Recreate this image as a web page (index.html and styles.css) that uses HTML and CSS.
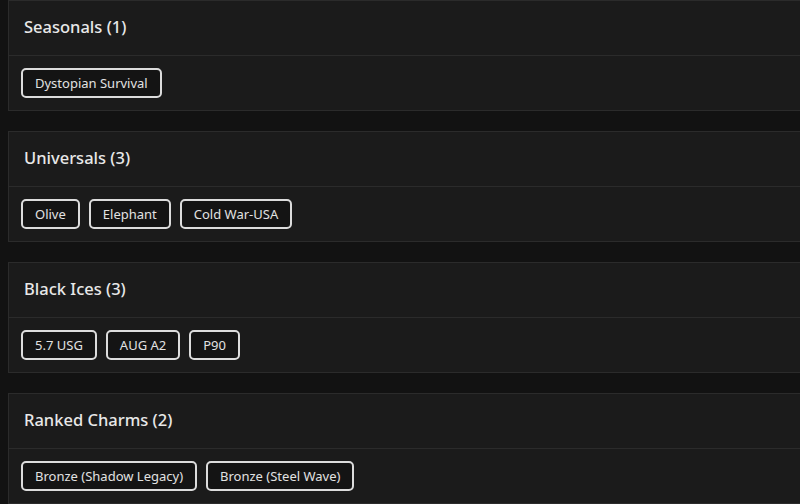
FILE: index.html
```html
<!DOCTYPE html>
<html lang="en">
<head>
<meta charset="utf-8">
<title>Collection</title>
<link rel="stylesheet" href="styles.css">
</head>
<body>
<div class="list">
  <section class="card">
    <header class="card-head"><h2>Seasonals (1)</h2></header>
    <div class="card-body">
      <span class="chip">Dystopian Survival</span>
    </div>
  </section>
  <section class="card">
    <header class="card-head"><h2>Universals (3)</h2></header>
    <div class="card-body">
      <span class="chip">Olive</span>
      <span class="chip">Elephant</span>
      <span class="chip">Cold War-USA</span>
    </div>
  </section>
  <section class="card">
    <header class="card-head"><h2>Black Ices (3)</h2></header>
    <div class="card-body">
      <span class="chip">5.7 USG</span>
      <span class="chip">AUG A2</span>
      <span class="chip">P90</span>
    </div>
  </section>
  <section class="card">
    <header class="card-head"><h2>Ranked Charms (2)</h2></header>
    <div class="card-body">
      <span class="chip">Bronze (Shadow Legacy)</span>
      <span class="chip">Bronze (Steel Wave)</span>
    </div>
  </section>
</div>
</body>
</html>
```

FILE: styles.css
```css
html, body {
  margin: 0;
  padding: 0;
  background: #121212;
  overflow: hidden;
}
body {
  font-family: "Noto Sans", "Open Sans", sans-serif;
  color: #e4e4e4;
}
.list {
  display: flex;
  flex-direction: column;
  gap: 20px;
  padding-left: 8px;
  width: 820px;
}
.card {
  background: #1b1b1b;
  border: 1px solid #2b2b2b;
}
.card-head {
  height: 54px;
  box-sizing: border-box;
  display: flex;
  align-items: center;
  padding: 0 15px 3px;
  border-bottom: 1px solid #2b2b2b;
  height: 55px;
}
.card-head h2 {
  margin: 0;
  font-size: 16.5px;
  font-weight: 500;
  color: #e8e8e8;
}
.card-body {
  display: flex;
  gap: 9px;
  padding: 12px 12px;
}
.chip {
  height: 30px;
  box-sizing: border-box;
  display: inline-flex;
  align-items: center;
  padding: 0 12px;
  border: 2px solid #dcdcdc;
  border-radius: 5px;
  background: #141414;
  font-size: 13px;
  color: #e2e2e2;
}
```
